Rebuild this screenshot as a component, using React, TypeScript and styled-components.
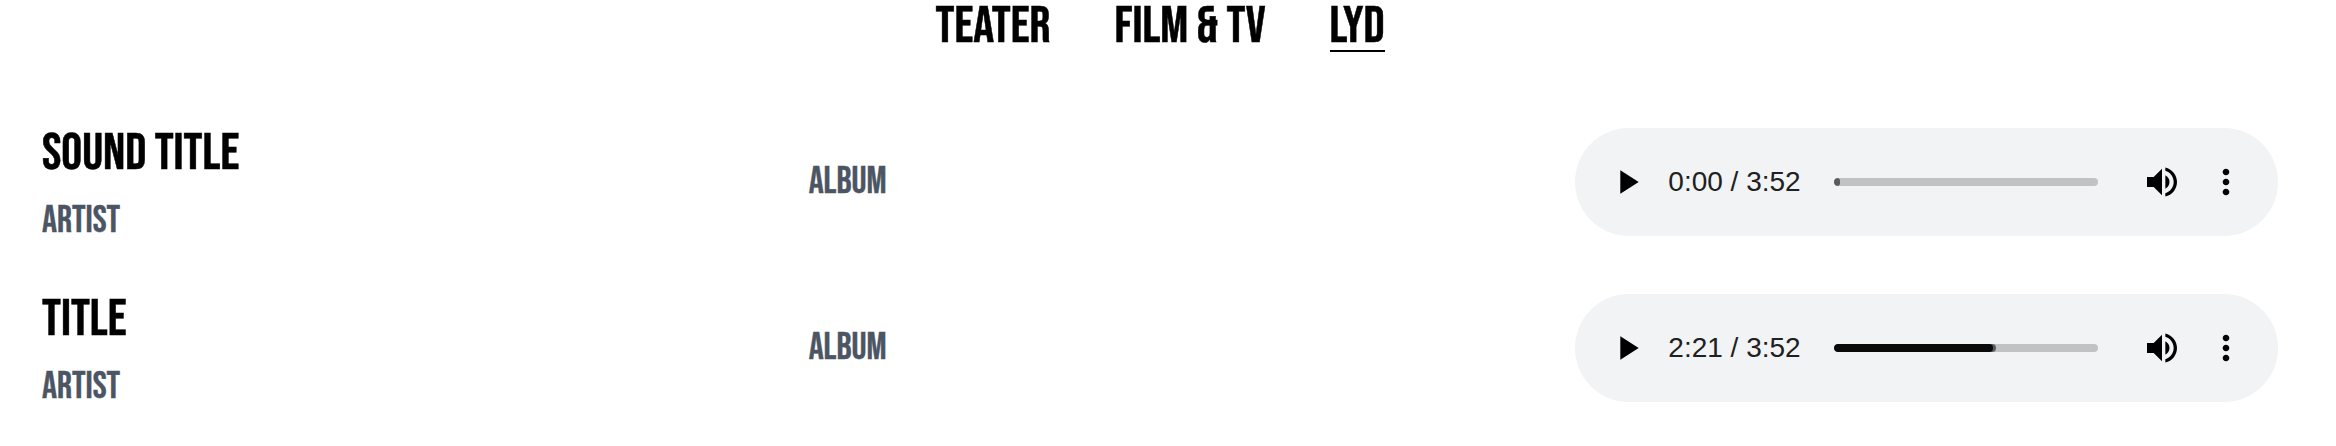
import React from "react";
import styled, { createGlobalStyle } from "styled-components";

const GlobalStyle = createGlobalStyle`
  *, *::before, *::after { box-sizing: border-box; }
  body {
    margin: 0;
    background: #fff;
    color: #000;
    font-family: "Bebas Neue", "Roboto Condensed", "Liberation Sans", sans-serif;
  }
`;

const Page = styled.main`
  padding: 0 58px 0 42px;
`;

const Nav = styled.nav`
  display: flex;
  justify-content: center;
  gap: 64px;
  height: 52px;
`;

const NavLink = styled.a<{ $active?: boolean }>`
  padding-top: 2px;
  font-size: 52px;
  line-height: 49px;
  white-space: nowrap;
  cursor: pointer;
  -webkit-text-stroke: 0.5px currentColor;
  border-bottom: 2px solid ${(p) => (p.$active ? "#000" : "transparent")};
`;

const SoundList = styled.section`
  display: flex;
  flex-direction: column;
  gap: 32px;
  margin-top: 63px;
`;

const SoundRow = styled.article`
  display: grid;
  grid-template-columns: repeat(3, minmax(0, 1fr));
  column-gap: 64px;
  align-items: center;
  height: 134px;
`;

const Info = styled.div`
  display: flex;
  flex-direction: column;
  gap: 13px;
`;

const Title = styled.h2`
  margin: 0;
  font-size: 52px;
  font-weight: 400;
  line-height: 64px;
  -webkit-text-stroke: 0.5px currentColor;
`;

const Meta = styled.p`
  margin: 0;
  color: #4b5563;
  font-size: 37.3px;
  line-height: 44px;
  -webkit-text-stroke: 0.4px currentColor;
`;

const Player = styled.div`
  display: flex;
  align-items: center;
  height: 108px;
  padding: 0 32px;
  border-radius: 54px;
  background: #f1f3f4;
`;

const IconButton = styled.button<{ $before?: number }>`
  display: block;
  flex: none;
  width: 40px;
  height: 40px;
  margin: 0 0 0 ${(p) => p.$before ?? 0}px;
  padding: 0;
  border: 0;
  background: none;
  color: #000;

  svg {
    display: block;
    width: 40px;
    height: 40px;
    fill: currentColor;
  }
`;

const Time = styled.span`
  flex: none;
  width: 144px;
  margin-left: 21px;
  color: #202020;
  font-family: "Liberation Sans", Arial, sans-serif;
  font-size: 28px;
  line-height: 40px;
  white-space: nowrap;
`;

const Track = styled.div`
  display: grid;
  flex: 1;
  height: 8px;
  margin-left: 22px;
  border-radius: 4px;
  background: #c1c2c3;
  overflow: hidden;
`;

const Fill = styled.div<{ $color: string }>`
  grid-area: 1 / 1;
  height: 8px;
  border-radius: 4px;
  background: ${(p) => p.$color};
`;

type Sound = {
  title: string;
  artist: string;
  album: string;
  current: string;
  duration: string;
  played: number;
  buffered: number;
};

const sounds: Sound[] = [
  { title: "SOUND TITLE", artist: "ARTIST", album: "ALBUM", current: "0:00", duration: "3:52", played: 0, buffered: 2.27 },
  { title: "TITLE", artist: "ARTIST", album: "ALBUM", current: "2:21", duration: "3:52", played: 60.2, buffered: 61.3 },
];

const PlayIcon = () => (
  <svg viewBox="0 0 24 24">
    <path d="M8 5v14l11-7z" />
  </svg>
);

const VolumeIcon = () => (
  <svg viewBox="0 0 24 24">
    <path d="M3 9v6h4l5 5V4L7 9H3zm13.5 3c0-1.77-1.02-3.29-2.5-4.03v8.05c1.48-.73 2.5-2.25 2.5-4.02zM14 3.23v2.06c2.89.86 5 3.54 5 6.71s-2.11 5.85-5 6.71v2.06c4.01-.91 7-4.49 7-8.77s-2.99-7.86-7-8.77z" />
  </svg>
);

const MoreIcon = () => (
  <svg viewBox="0 0 24 24">
    <path d="M12 8c1.1 0 2-.9 2-2s-.9-2-2-2-2 .9-2 2 .9 2 2 2zm0 2c-1.1 0-2 .9-2 2s.9 2 2 2 2-.9 2-2-.9-2-2-2zm0 6c-1.1 0-2 .9-2 2s.9 2 2 2 2-.9 2-2-.9-2-2-2z" />
  </svg>
);

const AudioPlayer = ({ sound }: { sound: Sound }) => (
  <Player>
    <IconButton aria-label="Play">
      <PlayIcon />
    </IconButton>
    <Time>
      {sound.current} / {sound.duration}
    </Time>
    <Track>
      <Fill $color="#5b5b5c" style={{ width: `${sound.buffered}%` }} />
      <Fill $color="#0a0a0a" style={{ width: `${sound.played}%` }} />
    </Track>
    <IconButton aria-label="Mute" $before={44}>
      <VolumeIcon />
    </IconButton>
    <IconButton aria-label="More options" $before={24}>
      <MoreIcon />
    </IconButton>
  </Player>
);

export default function App() {
  return (
    <>
      <GlobalStyle />
      <Page>
        <Nav>
          <NavLink>TEATER</NavLink>
          <NavLink>FILM &amp; TV</NavLink>
          <NavLink $active>LYD</NavLink>
        </Nav>
        <SoundList>
          {sounds.map((sound) => (
            <SoundRow key={sound.title}>
              <Info>
                <Title>{sound.title}</Title>
                <Meta>{sound.artist}</Meta>
              </Info>
              <Meta>{sound.album}</Meta>
              <AudioPlayer sound={sound} />
            </SoundRow>
          ))}
        </SoundList>
      </Page>
    </>
  );
}
